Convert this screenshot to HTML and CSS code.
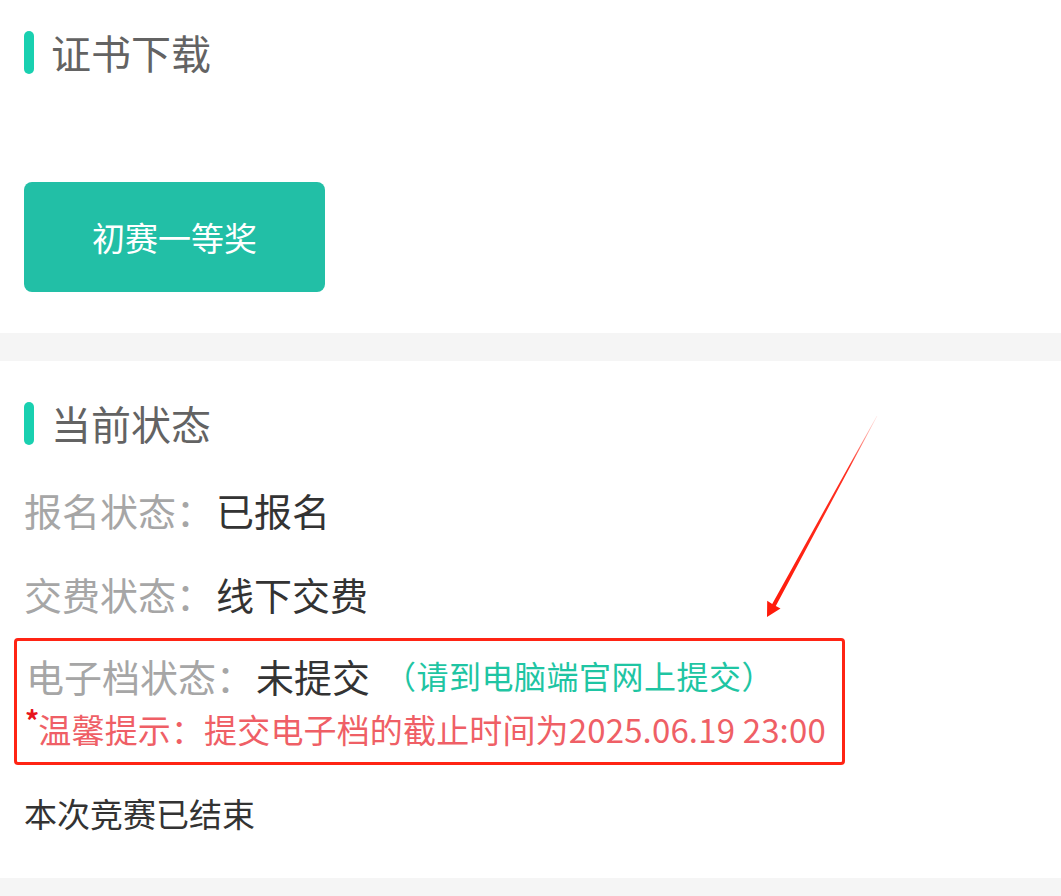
FILE: index.html
```html
<!DOCTYPE html>
<html lang="zh-CN">
<head>
<meta charset="utf-8">
<title>证书下载</title>
<link rel="stylesheet" href="styles.css">
</head>
<body>
<div class="page">
  <section class="card cert">
    <h2 class="title"><span class="bar"></span>证书下载</h2>
    <div class="btns"><a class="btn">初赛一等奖</a></div>
  </section>
  <div class="gap"></div>
  <section class="card status">
    <h2 class="title"><span class="bar"></span>当前状态</h2>
    <div class="row first"><span class="label">报名状态：</span><span class="value">已报名</span></div>
    <div class="row"><span class="label">交费状态：</span><span class="value">线下交费</span></div>
    <div class="notice">
      <div class="row doc"><span class="label">电子档状态：</span><span class="value">未提交</span><span class="hint">（请到电脑端官网上提交）</span></div>
      <div class="tip"><span class="star">*</span>温馨提示：提交电子档的截止时间为2025.06.19 23:00</div>
    </div>
    <div class="ended">本次竞赛已结束</div>
  </section>
  <div class="gap bottom"></div>
  <svg class="arrow" width="1061" height="896" viewBox="0 0 1061 896" aria-hidden="true">
    <defs>
      <linearGradient id="fade" gradientUnits="userSpaceOnUse" x1="877" y1="416" x2="767" y2="617">
        <stop offset="0" stop-color="#ff1a0a" stop-opacity="0.1"/>
        <stop offset="0.25" stop-color="#ff1a0a" stop-opacity="0.9"/>
        <stop offset="1" stop-color="#ff1a0a"/>
      </linearGradient>
    </defs>
    <polygon fill="url(#fade)" points="877.3,416.1 775.8,605.9 780.5,608.5 767,617 767.2,600.8 772.2,603.9 876.7,415.9"/>
  </svg>
</div>
</body>
</html>
```
FILE: styles.css
```css
* { box-sizing: border-box; }
html, body { margin: 0; padding: 0; background: #fff; }
body {
  font-family: "Noto Sans CJK SC", "Noto Sans", sans-serif;
  width: 1061px;
  height: 896px;
  overflow: hidden;
}
.page { position: relative; width: 1061px; }
.card { background: #fff; padding: 0 24px; }
.cert { padding-top: 31px; padding-bottom: 41px; }
.status { padding-top: 41px; padding-bottom: 41px; }
.gap { height: 28px; background: #f5f5f5; }
.gap.bottom { height: 18px; }

.title {
  display: flex;
  align-items: center;
  margin: 0;
  height: 43px;
  font-size: 40px;
  line-height: 43px;
  font-weight: 400;
  color: #636363;
}
.bar {
  width: 10px;
  height: 43px;
  border-radius: 5px;
  background: #19d0b0;
  margin-right: 17px;
}
.btns { margin-top: 108px; display: flex; }
.btn {
  width: 301px;
  height: 110px;
  border-radius: 8px;
  background: #22bfa6;
  color: #fff;
  font-size: 33px;
  display: flex;
  align-items: center;
  justify-content: center;
}

.row {
  display: flex;
  align-items: center;
  height: 84px;
  font-size: 38px;
  white-space: nowrap;
}
.row.first { margin-top: 22px; }
.label { color: #a6a6a6; }
.value { color: #333; margin-left: 2px; }
.hint { color: #1fc5a3; font-size: 32px; margin-left: 14px; letter-spacing: 0.5px; }

.notice {
  margin: 3px 0 0 -10px;
  width: 831px;
  border: 3px solid #ff2414;
  border-radius: 4px;
  padding: 9px 0 4px 9px;
}
.row.doc { height: 50px; }
.tip {
  height: 58px;
  display: flex;
  align-items: center;
  font-size: 33px;
  letter-spacing: 0.15px;
  color: #ef5f66;
  white-space: nowrap;
}
.star {
  color: #e8141c;
  font-size: 28px;
  font-weight: 700;
  align-self: flex-start;
  margin-top: 6px;
  margin-left: -1px;
  margin-right: -1px;
  line-height: 1;
}
.ended {
  margin-top: 24px;
  font-size: 33px;
  line-height: 48px;
  color: #333;
}
.arrow { position: absolute; left: 0; top: 0; pointer-events: none; }
```
